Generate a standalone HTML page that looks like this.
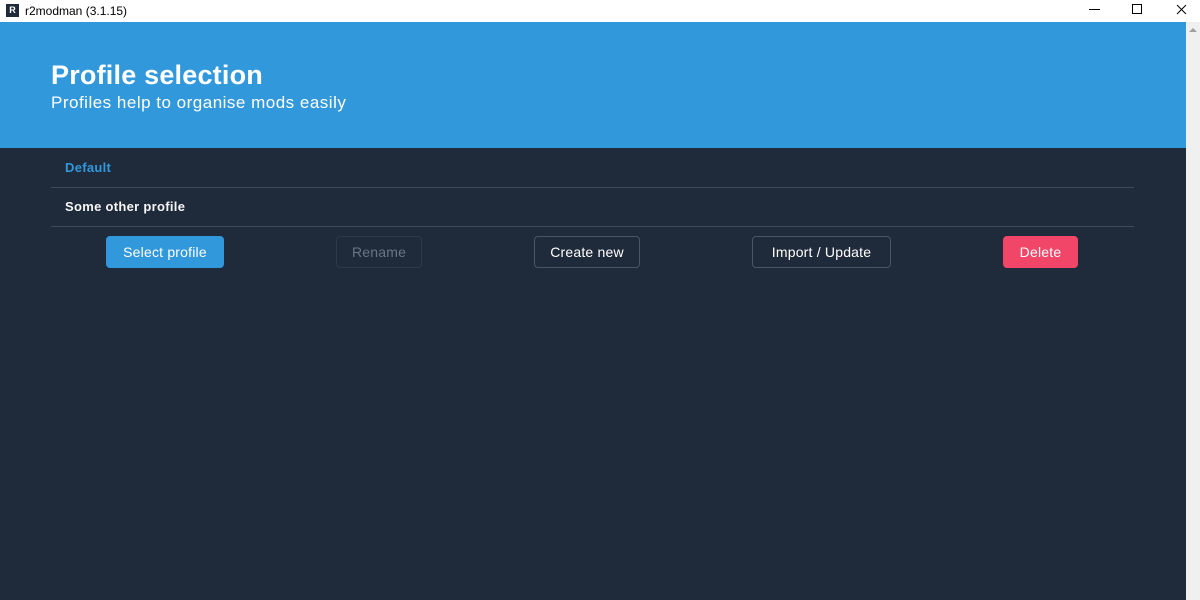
<!DOCTYPE html>
<html><head><style>
*{margin:0;padding:0;box-sizing:border-box}
body{width:1200px;height:600px;overflow:hidden;background:#1f2a3b;font-family:"Liberation Sans",sans-serif;position:relative}
.tb{position:absolute;top:0;left:0;width:1200px;height:22px;background:#fff;color:#000;font-size:12px}
.tb .ic{position:absolute;left:6px;top:4px;width:13px;height:13px;background:#1f2a3b;color:#fff;font-size:9px;font-weight:bold;text-align:center;line-height:13px}
.tb .t{position:absolute;left:25px;top:4px}
.hd{position:absolute;top:22px;left:0;width:1186px;height:126px;background:#3298dc;color:#fff}
.hd h1{position:absolute;left:51px;top:38px;font-size:27px;font-weight:bold;letter-spacing:0.2px}
.hd p{position:absolute;left:51px;top:71px;font-size:17px;letter-spacing:0.5px}
.sb{position:absolute;top:22px;left:1186px;width:14px;height:578px;background:#f0f0f0}
.row{position:absolute;left:51px;width:1083px;height:39px;border-bottom:1px solid #3e4a5a;font-size:13px;font-weight:bold;padding-left:14px;line-height:38px;letter-spacing:0.3px}
.btn{position:absolute;top:236px;height:32px;border-radius:4px;font-size:14px;text-align:center;line-height:30px;color:#fff;border:1px solid #4a5566;letter-spacing:0.2px}
</style></head><body>
<div class="tb"><div class="ic">R</div><div class="t">r2modman (3.1.15)</div>
<div style="position:absolute;left:1089px;top:9px;width:11px;height:1px;background:#000"></div>
<div style="position:absolute;left:1132px;top:4px;width:10px;height:10px;border:1px solid #000"></div>
<svg style="position:absolute;left:1176px;top:4px" width="11" height="11"><path d="M1 1L10 10M10 1L1 10" stroke="#000" stroke-width="1"/></svg></div>
<div class="hd"><h1>Profile selection</h1><p>Profiles help to organise mods easily</p></div>
<div class="sb"><div style="margin:6px auto 0;width:0;height:0;border-left:4px solid transparent;border-right:4px solid transparent;border-bottom:4px solid #a0a0a0"></div></div>
<div class="row" style="top:149px;color:#3298dc">Default</div>
<div class="row" style="top:188px;color:#f5f5f5">Some other profile</div>
<div class="btn" style="left:106px;width:118px;background:#3298dc;border-color:#3298dc">Select profile</div>
<div class="btn" style="left:336px;width:86px;color:#6a7482;border-color:#2e3949">Rename</div>
<div class="btn" style="left:534px;width:106px">Create new</div>
<div class="btn" style="left:752px;width:139px">Import / Update</div>
<div class="btn" style="left:1003px;width:75px;background:#f14668;border-color:#f14668">Delete</div>
</body></html>
